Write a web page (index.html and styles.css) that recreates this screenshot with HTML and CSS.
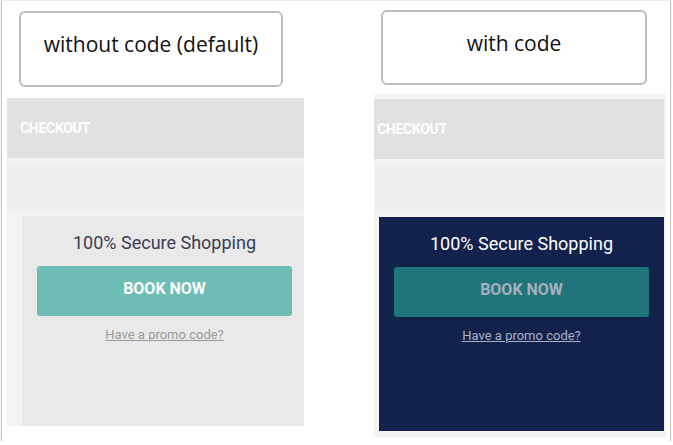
FILE: index.html
```html
<!DOCTYPE html>
<html>
<head>
<meta charset="utf-8">
<link rel="stylesheet" href="styles.css">
</head>
<body>
<div class="frame">
  <div class="col col-left">
    <div class="label label-left">without code (default)</div>
    <div class="panel panel-left">
      <div class="checkout checkout-left">CHECKOUT</div>
      <div class="block"></div>
      <div class="card card-light">
        <div class="secure">100% Secure Shopping</div>
        <div class="book">BOOK NOW</div>
        <a class="promo">Have a promo code?</a>
      </div>
    </div>
  </div>
  <div class="col col-right">
    <div class="label label-right">with code</div>
    <div class="panel panel-right">
      <div class="checkout checkout-right">CHECKOUT</div>
      <div class="block"></div>
      <div class="card card-dark">
        <div class="secure">100% Secure Shopping</div>
        <div class="book">BOOK NOW</div>
        <a class="promo">Have a promo code?</a>
      </div>
    </div>
  </div>
</div>
</body>
</html>
```
FILE: styles.css
```css
html, body {
  margin: 0;
  padding: 0;
  background: #ffffff;
}
.frame {
  margin-left: 1px;
  width: 670px;
  height: 441px;
  box-sizing: border-box;
  border-left: 1px solid #c4c4c4;
  border-right: 1px solid #c4c4c4;
  border-top: 1px solid #ececec;
  box-shadow: 0 2px 0 #8c8c8c, 0 3px 1px #cfcfcf;
  display: flex;
  padding-left: 5px;
  gap: 70px;
}
.col {
  display: flex;
  flex-direction: column;
}
.col-left { width: 297px; }
.col-right { width: 292px; }
.label {
  box-sizing: border-box;
  border: 2px solid #bdbdbd;
  border-radius: 6px;
  font-family: "Open Sans", "DejaVu Sans", sans-serif;
  font-size: 21px;
  line-height: 26px;
  color: #111;
  text-align: center;
  padding-top: 18px;
}
.label-left {
  margin: 10px 0 0 12px;
  width: 264px;
  height: 76px;
}
.label-right {
  margin: 9px 0 0 7px;
  width: 266px;
  height: 75px;
}
.panel {
  display: flex;
  flex-direction: column;
  background: #f4f4f4;
  gap: 5px;
}
.panel-left {
  margin-top: 11px;
  height: 328px;
}
.panel-right {
  margin-top: 9px;
  padding: 5px 2px 6px 0;
  box-sizing: border-box;
  height: 343px;
}
.checkout {
  height: 60px;
  background: #e1e1e1;
  color: #ffffff;
  font-family: Roboto, "Liberation Sans", sans-serif;
  font-weight: 700;
  font-size: 14px;
  display: flex;
  align-items: center;
  letter-spacing: -0.3px;
}
.checkout-left { padding-left: 13px; }
.checkout-right { padding-left: 3px; }
.block {
  height: 48px;
  background: #efefef;
}
.card {
  flex: 1;
  display: flex;
  flex-direction: column;
  align-items: center;
  font-family: Roboto, "Liberation Sans", sans-serif;
}
.card-light {
  margin-left: 15px;
  background: #e9e9e9;
  padding: 0 12px 0 15px;
}
.card-dark {
  margin-left: 5px;
  background: #13224d;
  padding: 0 15px;
}
.secure {
  font-size: 18px;
  margin-top: 16px;
  line-height: 22px;
}
.card-light .secure { color: #3b3d55; }
.card-dark .secure { color: #ffffff; }
.book {
  margin-top: 12px;
  width: 255px;
  height: 50px;
  box-sizing: border-box;
  padding-bottom: 5px;
  border-radius: 3px;
  display: flex;
  align-items: center;
  justify-content: center;
  font-weight: 700;
  font-size: 16px;
}
.card-light .book { background: #6dbdb5; color: #ffffff; }
.card-dark .book { background: #1f7579; color: #a8b0c0; }
.promo {
  margin-top: 11px;
  font-size: 13px;
  text-decoration: underline;
  line-height: 16px;
}
.card-light .promo { color: #9a9a9a; }
.card-dark .promo { color: #aab0c4; }
```
